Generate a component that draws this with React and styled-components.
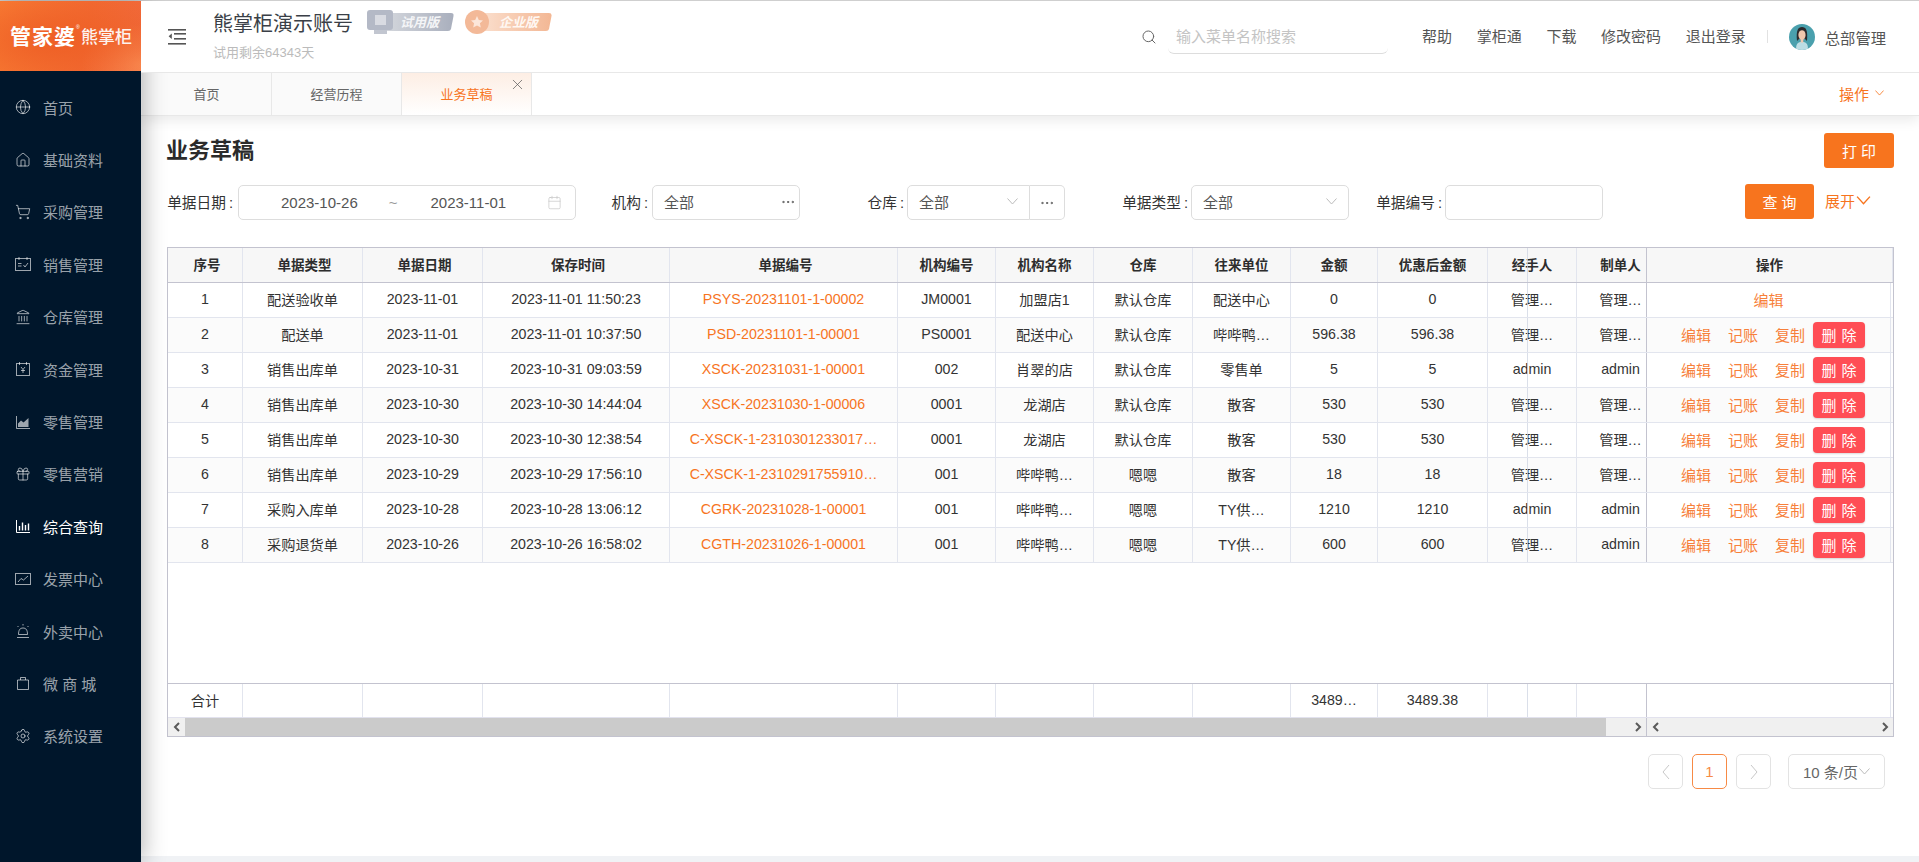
import styled, { createGlobalStyle, css } from 'styled-components';
import { Globe, House, ShoppingCart, Landmark, Gift, Settings, Search, X, Calendar, Ellipsis } from 'lucide-react';

const orange = '#f7741e';
const FONT = '"Liberation Sans", "Noto Sans CJK SC", sans-serif';

const GlobalStyle = createGlobalStyle`
  html, body {
    margin: 0;
    height: 100%;
    overflow: hidden;
    background: #fff;
    font-family: ${FONT};
    color: #333;
  }
  * { box-sizing: border-box; }
`;

const Page = styled.div`
  display: flex;
  height: 100vh;
  border-top: 1px solid #cfcfcf;
`;

const Sidebar = styled.aside`
  position: relative;
  z-index: 2;
  flex: 0 0 141px;
  background: #00162b;
  box-shadow: 2px 0 22px rgba(0, 0, 0, 0.3);
`;

const Logo = styled.div`
  height: 70px;
  display: flex;
  align-items: center;
  padding: 0 0 2px 10px;
  color: #fff;
  white-space: nowrap;
  background:
    radial-gradient(ellipse 120px 50px at 40% 55%, #ee5f25 0%, rgba(238, 95, 37, 0) 100%),
    radial-gradient(ellipse 60px 40px at 100% 90%, #f98a52 0%, rgba(249, 138, 82, 0) 100%),
    linear-gradient(100deg, #f87b33 0%, #f26a32 60%, #f0683a 100%);

  b {
    font-size: 21px;
    font-weight: 700;
    letter-spacing: 1px;
  }
  em {
    align-self: flex-start;
    margin: 23px 0 0 0;
    width: 5px;
    font-size: 5px;
    font-style: normal;
  }
  span {
    font-size: 17px;
    font-weight: 500;
    opacity: 0.92;
  }
`;

const Menu = styled.nav`
  padding-top: 10px;
`;

const MenuItem = styled.div`
  height: 52.4px;
  display: flex;
  align-items: center;
  gap: 12px;
  padding-left: 15px;
  font-size: 15px;
  color: ${(p) => (p.$active ? '#fff' : 'rgba(255, 255, 255, 0.62)')};

  svg {
    flex: 0 0 16px;
  }
`;

const Right = styled.div`
  flex: 1;
  min-width: 0;
  display: flex;
  flex-direction: column;
`;

const Header = styled.header`
  position: relative;
  z-index: 3;
  height: 72px;
  display: flex;
  align-items: center;
  padding: 0 33px 0 27px;
  background: #fff;
  border-bottom: 1px solid #e8e8e8;
`;

const Account = styled.div`
  margin-left: 27px;
  display: flex;
  flex-direction: column;
  gap: 8px;
  margin-top: 2px;
`;

const AccountRow = styled.div`
  display: flex;
  align-items: center;
  gap: 11px;
  height: 24px;
  margin-top: -4px;
`;

const AccountName = styled.div`
  font-size: 20px;
  color: #3a3f47;
  margin-right: 3px;
`;

const Remain = styled.div`
  font-size: 13px;
  color: #bbb;
`;

const SearchBox = styled.div`
  margin-left: auto;
  display: flex;
  align-items: center;
  gap: 11px;
  color: #666;
`;

const SearchField = styled.div`
  width: 220px;
  height: 33px;
  padding: 0 8px 3px;
  display: flex;
  align-items: center;
  margin-top: 2px;
  font-size: 15px;
  color: #c4c4c4;
  border-bottom: 1px solid #ddd;
  border-radius: 0 0 6px 6px;
`;

const TopLinks = styled.div`
  margin-left: 34px;
  padding-bottom: 2px;
  display: flex;
  gap: 24.7px;
  font-size: 15px;
  color: #555;
`;

const Divider = styled.div`
  width: 1px;
  height: 13px;
  margin: 0 21px 0 21px;
  background: #e2e2e2;
`;

const UserName = styled.div`
  margin-left: 10px;
  font-size: 15.3px;
  color: #555;
`;

const TabBar = styled.div`
  position: relative;
  z-index: 1;
  height: 43px;
  display: flex;
  align-items: stretch;
  padding: 0 35px 0 1px;
  background: #fff;
  border-bottom: 1px solid #e8e8e8;
  box-shadow: 0 4px 14px rgba(0, 0, 0, 0.09);
`;

const Tab = styled.div`
  position: relative;
  width: 130px;
  padding-bottom: 2px;
  display: flex;
  align-items: center;
  justify-content: center;
  font-size: 13px;
  color: ${(p) => (p.$active ? orange : '#666')};
  background: ${(p) => (p.$active ? 'linear-gradient(180deg, #fdeee4 0%, #ffffff 100%)' : '#fafafa')};
  border-right: 1px solid #e8e8e8;
`;

const TabClose = styled.span`
  position: absolute;
  top: 3px;
  right: 5px;
  display: flex;
  color: #555;
`;

const TabAction = styled.div`
  margin-left: auto;
  padding-bottom: 2px;
  display: flex;
  align-items: center;
  gap: 6px;
  font-size: 15px;
  color: ${orange};
`;

const Main = styled.main`
  flex: 1;
  min-height: 0;
  padding: 17px 25px 0 26px;
  background: #fff;
`;

const TitleRow = styled.div`
  display: flex;
  align-items: center;
  justify-content: space-between;
  height: 35px;
`;

const Title = styled.h2`
  margin: 0 0 0 -1px;
  padding-bottom: 6px;
  font-size: 22px;
  font-weight: 700;
  color: #2b2b2b;
`;

const PrimaryButton = styled.button`
  width: ${(p) => p.$w}px;
  height: 35px;
  padding: 0 0 0 4px;
  border: 0;
  border-radius: 3px;
  background: ${orange};
  color: #fff;
  font-family: ${FONT};
  font-size: 15px;
  letter-spacing: 4px;
`;

const FilterRow = styled.div`
  display: flex;
  align-items: center;
  height: 35px;
  margin-top: 17px;
`;

const Field = styled.div`
  flex: 0 0 ${(p) => p.$w}px;
  display: flex;
  align-items: center;
  justify-content: flex-end;
`;

const Label = styled.div`
  margin-right: ${(p) => p.$gap || 3}px;
  padding-bottom: 2px;
  font-size: 14.7px;
  color: #333;
  white-space: nowrap;

  &::after {
    content: ':';
    margin-left: 3px;
  }
`;

const InputBox = styled.div`
  width: ${(p) => p.$w}px;
  height: 35px;
  display: flex;
  align-items: center;
  justify-content: space-between;
  padding: 0 ${(p) => p.$pr || 11}px 2px 11px;
  font-size: 15px;
  color: #555;
  background: #fff;
  border: 1px solid #ddd;
  border-radius: ${(p) => (p.$joined ? '5px 0 0 5px' : '5px')};
`;

const SideButton = styled.div`
  width: 35px;
  height: 35px;
  display: flex;
  align-items: center;
  justify-content: center;
  color: #555;
  border: 1px solid #ddd;
  border-left: 0;
  border-radius: 0 5px 5px 0;
`;

const DateBox = styled(InputBox)`
  padding: 0 13px 0 42px;
  justify-content: flex-start;

  i {
    font-style: normal;
    color: #999;
    margin: 0 33px 0 31px;
  }
  svg {
    margin-left: auto;
  }
`;

const Expand = styled.div`
  margin-left: 11px;
  padding-bottom: 2px;
  display: flex;
  align-items: center;
  gap: 1px;
  font-size: 15px;
  color: ${orange};
`;

const Buttons = styled.div`
  margin-left: auto;
  margin-right: 23px;
  margin-top: -2px;
  display: flex;
  align-items: center;
`;

const Table = styled.div`
  margin-top: 27px;
  border: 1px solid #c3c3cf;
  font-size: 14.2px;
  color: #333;
`;

// fixed column edge that shows through the rows of the scrolled table
const seam = css`
  position: relative;

  &::after {
    content: '';
    position: absolute;
    top: 0;
    bottom: 0;
    left: 1359px;
    width: 1px;
    background: rgba(205, 212, 226, 0.75);
  }
`;

const COLUMNS = '75px 120px 120px 187px 228px 98px 98px 99px 98px 87px 110px 89px 70px 246px';

const HeadRow = styled.div`
  ${seam}
  display: grid;
  grid-template-columns: ${COLUMNS};
  height: 35px;
  background: #f7f7f7;
  border-bottom: 1px solid #c3c3cf;
  font-size: 13.5px;
  font-weight: 700;
  color: #2d2d2d;
`;

const BodyRow = styled.div`
  ${seam}
  display: grid;
  grid-template-columns: ${COLUMNS};
  height: 35px;
  background: ${(p) => (p.$odd ? '#fff' : '#fbfbfb')};
  border-bottom: 1px solid #e2e5ee;
`;

const Blank = styled.div`
  height: 120px;
`;

const FootRow = styled.div`
  ${seam}
  display: grid;
  grid-template-columns: ${COLUMNS};
  height: 35px;
  border-top: 1px solid #c3c3cf;
  border-bottom: 1px solid #e2e2ee;
`;

const Cell = styled.div`
  display: flex;
  align-items: center;
  justify-content: center;
  min-width: 0;
  white-space: nowrap;
  padding-left: ${(p) => p.$pl || 0}px;
  padding-bottom: 2px;
  border-right: 1px solid ${(p) => (p.$dark ? '#c3c3cf' : '#e2e5ee')};
`;

const Link = styled.span`
  color: ${orange};
`;

const ActionCell = styled.div`
  display: flex;
  align-items: center;
  justify-content: center;
  gap: 17px;
  margin-right: 2px;
  font-size: 15px;
  border-right: 1px solid #e2e5ee;
`;

const ActionLink = styled.span`
  padding-bottom: 2px;
  color: #f7803a;
`;

const DeleteButton = styled.span`
  width: 52px;
  height: 26px;
  margin: 0 -9px 0 -9px;
  padding: 0 0 1px 5px;
  display: flex;
  align-items: center;
  justify-content: center;
  border-radius: 4px;
  background: #ff4d55;
  color: #fff;
  font-size: 15px;
  letter-spacing: 5px;
  box-shadow: 0 1px 2px rgba(0, 0, 0, 0.15);
`;

const ScrollRow = styled.div`
  display: flex;
  height: 18px;
  background: #f0f0f0;
`;

const ScrollLeft = styled.div`
  flex: 0 0 1479px;
  display: flex;
  align-items: center;
  justify-content: space-between;
  border-right: 1px solid #c3c3cf;
`;

const ScrollRight = styled.div`
  flex: 1;
  display: flex;
  align-items: center;
  justify-content: space-between;
`;

const Arrow = styled.div`
  flex: 0 0 17px;
  display: flex;
  align-items: center;
  justify-content: center;
  color: #555;
`;

const Thumb = styled.div`
  flex: 1;
  align-self: stretch;
  margin-right: 23px;
  background: #cbcbcb;
`;

const Pager = styled.div`
  display: flex;
  justify-content: flex-end;
  gap: 9px;
  margin-top: 17px;
  padding-right: 9px;
`;

const PageButton = styled.div`
  width: 35px;
  height: 35px;
  display: flex;
  align-items: center;
  justify-content: center;
  font-size: 15px;
  color: ${(p) => (p.$active ? '#f78a45' : '#ccc')};
  border: 1px solid ${(p) => (p.$active ? '#f78a45' : '#e3e3e3')};
  border-radius: 5px;
`;

const PageSize = styled.div`
  width: 97px;
  height: 35px;
  margin-left: 8px;
  padding-bottom: 1px;
  display: flex;
  align-items: center;
  justify-content: center;
  gap: 1px;
  font-size: 15px;
  color: #666;
  border: 1px solid #e3e3e3;
  border-radius: 5px;
`;

const BottomBand = styled.div`
  flex: 0 0 6px;
  background: #f0f2f5;
`;

const Chevron = ({ w = 11, h = 7, color = 'currentColor', sw = 1 }) => (
  <svg width={w} height={h} viewBox="0 0 11 7" fill="none" stroke={color} strokeWidth={sw}>
    <path d="M0.5 0.5 L5.5 6 L10.5 0.5" />
  </svg>
);

const Caret = ({ dir }) => (
  <svg width="10" height="18" viewBox="0 0 10 18" fill="none" stroke="#c8c8c8" strokeWidth="1">
    <path d={dir === 'left' ? 'M8 2 L2 9 L8 16' : 'M2 2 L8 9 L2 16'} />
  </svg>
);

const ScrollArrow = ({ dir }) => (
  <svg width="8" height="10" viewBox="0 0 8 10" fill="none" stroke="#5a5a5a" strokeWidth="2">
    <path d={dir === 'left' ? 'M6 1 L2 5 L6 9' : 'M2 1 L6 5 L2 9'} />
  </svg>
);

const MenuToggle = () => (
  <svg width="18" height="16" viewBox="0 0 18 16" fill="#555">
    <rect x="0" y="0" width="18" height="1.6" />
    <rect x="6" y="4" width="12" height="1.6" />
    <rect x="6" y="9" width="12" height="1.6" />
    <rect x="0" y="14" width="18" height="1.6" />
    <path d="M3.8 4.4 L0.6 7.2 L3.8 10 Z" />
  </svg>
);

const Line = ({ children }) => (
  <svg width="16" height="16" viewBox="0 0 16 16" fill="none" stroke="currentColor" strokeWidth="1">
    {children}
  </svg>
);

const SaleIcon = () => (
  <Line>
    <rect x="0.5" y="2.5" width="15" height="12" />
    <path d="M4 1 V4 M12 1 V4 M3 7.5 H6.5 M3 10 H6.5 M8.5 9 L10 11 L13 7" />
  </Line>
);
const FundIcon = () => (
  <Line>
    <rect x="1.5" y="2.5" width="13" height="12" />
    <path d="M4.5 1 V4 M11.5 1 V4 M6 6 L8 8.5 L10 6 M8 8.5 V12 M6 9.5 H10" />
  </Line>
);
const AreaIcon = () => (
  <Line>
    <path d="M1.5 2 V14.5 H15" />
    <path d="M3 13 V9.5 L6 6.5 L8.5 8.5 L13.5 4 V13 Z" fill="currentColor" stroke="none" />
  </Line>
);
const BarsIcon = () => (
  <Line>
    <path d="M1.5 2 V14.5 H15" />
    <path d="M4.5 12.5 V8 M7.5 12.5 V4.5 M10.5 12.5 V7 M13.5 12.5 V5.5" strokeWidth="1.4" />
  </Line>
);
const TrendIcon = () => (
  <Line>
    <rect x="0.5" y="2.5" width="15" height="11" />
    <path d="M3 11 L6 7.5 L8.5 9 L13 5" />
  </Line>
);
const AlarmIcon = () => (
  <Line>
    <path d="M3.5 11.5 C3.5 7 5 5 8 5 C11 5 12.5 7 12.5 11.5 Z M2 14.5 H14 M8 1 V2.5 M2.5 3 L3.5 4 M13.5 3 L12.5 4" />
  </Line>
);
const BagIcon = () => (
  <Line>
    <path d="M2.5 5 H13.5 V14.5 H2.5 Z M5.5 5 V2.5 H10.5 V5" />
  </Line>
);

const lucideProps = { size: 16, strokeWidth: 1.5 };

const MENU = [
  { label: '首页', icon: <Globe {...lucideProps} /> },
  { label: '基础资料', icon: <House {...lucideProps} /> },
  { label: '采购管理', icon: <ShoppingCart {...lucideProps} /> },
  { label: '销售管理', icon: <SaleIcon /> },
  { label: '仓库管理', icon: <Landmark {...lucideProps} /> },
  { label: '资金管理', icon: <FundIcon /> },
  { label: '零售管理', icon: <AreaIcon /> },
  { label: '零售营销', icon: <Gift {...lucideProps} /> },
  { label: '综合查询', icon: <BarsIcon />, active: true },
  { label: '发票中心', icon: <TrendIcon /> },
  { label: '外卖中心', icon: <AlarmIcon /> },
  { label: '微 商 城', icon: <BagIcon /> },
  { label: '系统设置', icon: <Settings {...lucideProps} /> },
];

const TrialBadge = () => (
  <svg width="87" height="24" viewBox="0 0 87 24">
    <defs>
      <linearGradient id="trialBar" x1="0" x2="1" y1="0" y2="0">
        <stop offset="0" stopColor="#d3d6dc" />
        <stop offset="1" stopColor="#a9afbd" />
      </linearGradient>
    </defs>
    <path d="M20 3 H84 Q87 3 86.5 6 L84 19 Q83.5 21 81 21 H20 Z" fill="url(#trialBar)" />
    <rect x="0" y="0" width="26" height="20" rx="3" fill="#b4b9c6" />
    <rect x="7" y="20" width="13" height="4" fill="#c2c6d0" />
    <rect x="8" y="5" width="11" height="10" fill="#d9dbe2" />
    <text x="33" y="17" fontFamily={FONT} fontSize="13" fontWeight="700" fontStyle="italic" fill="#f4f5f7">试用版</text>
  </svg>
);

const ProBadge = () => (
  <svg width="87" height="24" viewBox="0 0 87 24">
    <defs>
      <linearGradient id="proBar" x1="0" x2="1" y1="0" y2="0">
        <stop offset="0" stopColor="#fbe0cf" />
        <stop offset="1" stopColor="#f3b794" />
      </linearGradient>
    </defs>
    <path d="M14 3 H84 Q87 3 86.5 6 L84 19 Q83.5 21 81 21 H14 Z" fill="url(#proBar)" />
    <circle cx="12" cy="12" r="12" fill="#f3b998" />
    <path d="M12 6 L13.8 10 L18 10.5 L14.9 13.3 L15.8 17.6 L12 15.4 L8.2 17.6 L9.1 13.3 L6 10.5 L10.2 10 Z" fill="#fce6da" />
    <text x="34" y="17" fontFamily={FONT} fontSize="13" fontWeight="700" fontStyle="italic" fill="#fff8f3">企业版</text>
  </svg>
);

const Avatar = () => (
  <svg width="26" height="26" viewBox="0 0 26 26">
    <defs>
      <clipPath id="avatarClip">
        <circle cx="13" cy="13" r="13" />
      </clipPath>
    </defs>
    <g clipPath="url(#avatarClip)">
      <rect width="26" height="26" fill="#4aa0ad" />
      <path d="M7 26 C7 19 9 18 13 18 C17 18 19 19 19 26 Z" fill="#bcdde4" />
      <path d="M8 17 C7 6 9 3 13 3 C17 3 19 6 18 17 L16 15 H10 Z" fill="#2c2a2d" />
      <ellipse cx="13" cy="11" rx="3.6" ry="4.8" fill="#f0c7ad" />
      <rect x="11.7" y="14" width="2.6" height="4.5" fill="#f0c7ad" />
    </g>
  </svg>
);

const ROWS = [
  ['1', '配送验收单', '2023-11-01', '2023-11-01 11:50:23', 'PSYS-20231101-1-00002', 'JM0001', '加盟店1', '默认仓库', '配送中心', '0', '0', '管理…', '管理…'],
  ['2', '配送单', '2023-11-01', '2023-11-01 10:37:50', 'PSD-20231101-1-00001', 'PS0001', '配送中心', '默认仓库', '哔哔鸭…', '596.38', '596.38', '管理…', '管理…'],
  ['3', '销售出库单', '2023-10-31', '2023-10-31 09:03:59', 'XSCK-20231031-1-00001', '002', '肖翠的店', '默认仓库', '零售单', '5', '5', 'admin', 'admin'],
  ['4', '销售出库单', '2023-10-30', '2023-10-30 14:44:04', 'XSCK-20231030-1-00006', '0001', '龙湖店', '默认仓库', '散客', '530', '530', '管理…', '管理…'],
  ['5', '销售出库单', '2023-10-30', '2023-10-30 12:38:54', 'C-XSCK-1-2310301233017…', '0001', '龙湖店', '默认仓库', '散客', '530', '530', '管理…', '管理…'],
  ['6', '销售出库单', '2023-10-29', '2023-10-29 17:56:10', 'C-XSCK-1-2310291755910…', '001', '哔哔鸭…', '嗯嗯', '散客', '18', '18', '管理…', '管理…'],
  ['7', '采购入库单', '2023-10-28', '2023-10-28 13:06:12', 'CGRK-20231028-1-00001', '001', '哔哔鸭…', '嗯嗯', 'TY供…', '1210', '1210', 'admin', 'admin'],
  ['8', '采购退货单', '2023-10-26', '2023-10-26 16:58:02', 'CGTH-20231026-1-00001', '001', '哔哔鸭…', '嗯嗯', 'TY供…', '600', '600', '管理…', 'admin'],
];

const HEADS = ['序号', '单据类型', '单据日期', '保存时间', '单据编号', '机构编号', '机构名称', '仓库', '往来单位', '金额', '优惠后金额', '经手人', '制单人', '操作'];

const FOOT = ['合计', '', '', '', '', '', '', '', '', '3489…', '3489.38', '', ''];

const cellProps = (i) => (i === 12 ? { $dark: true, $pl: 18 } : {});

export default function App() {
  return (
    <>
      <GlobalStyle />
      <Page>
        <Sidebar>
          <Logo>
            <b>管家婆</b>
            <em>®</em>
            <span>熊掌柜</span>
          </Logo>
          <Menu>
            {MENU.map((m) => (
              <MenuItem key={m.label} $active={m.active}>
                {m.icon}
                {m.label}
              </MenuItem>
            ))}
          </Menu>
        </Sidebar>
        <Right>
          <Header>
            <MenuToggle />
            <Account>
              <AccountRow>
                <AccountName>熊掌柜演示账号</AccountName>
                <TrialBadge />
                <ProBadge />
              </AccountRow>
              <Remain>试用剩余64343天</Remain>
            </Account>
            <SearchBox>
              <Search size={16} strokeWidth={1.5} />
              <SearchField>输入菜单名称搜索</SearchField>
            </SearchBox>
            <TopLinks>
              <span>帮助</span>
              <span>掌柜通</span>
              <span>下载</span>
              <span>修改密码</span>
              <span>退出登录</span>
            </TopLinks>
            <Divider />
            <Avatar />
            <UserName>总部管理</UserName>
          </Header>
          <TabBar>
            <Tab>首页</Tab>
            <Tab>经营历程</Tab>
            <Tab $active>
              业务草稿
              <TabClose>
                <X size={17} strokeWidth={1} />
              </TabClose>
            </Tab>
            <TabAction>
              操作
              <Chevron w={9} h={6} />
            </TabAction>
          </TabBar>
          <Main>
            <TitleRow>
              <Title>业务草稿</Title>
              <PrimaryButton $w={70}>打印</PrimaryButton>
            </TitleRow>
            <FilterRow>
              <Field $w={409}>
                <Label $gap={5}>单据日期</Label>
                <DateBox $w={338}>
                  2023-10-26
                  <i>~</i>
                  2023-11-01
                  <Calendar size={15} strokeWidth={1.1} color="#c4c4c4" />
                </DateBox>
              </Field>
              <Field $w={224}>
                <Label $gap={4}>机构</Label>
                <InputBox $w={148} $pr={3}>
                  全部
                  <Ellipsis size={16} strokeWidth={1.4} color="#555" />
                </InputBox>
              </Field>
              <Field $w={265}>
                <Label>仓库</Label>
                <InputBox $w={123} $joined>
                  全部
                  <Chevron color="#bbb" />
                </InputBox>
                <SideButton>
                  <Ellipsis size={16} strokeWidth={1.4} />
                </SideButton>
              </Field>
              <Field $w={284}>
                <Label>单据类型</Label>
                <InputBox $w={158}>
                  全部
                  <Chevron color="#bbb" />
                </InputBox>
              </Field>
              <Field $w={254}>
                <Label>单据编号</Label>
                <InputBox $w={158} />
              </Field>
              <Buttons>
                <PrimaryButton $w={69}>查询</PrimaryButton>
                <Expand>
                  展开
                  <Chevron w={15} h={9} sw={1.1} />
                </Expand>
              </Buttons>
            </FilterRow>
            <Table>
              <HeadRow>
                {HEADS.map((h, i) => (
                  <Cell key={h} {...cellProps(i)} {...(i < 5 ? { $pl: 4 } : {})}>{h}</Cell>
                ))}
              </HeadRow>
              {ROWS.map((r, idx) => (
                <BodyRow key={r[0]} $odd={idx % 2 === 0}>
                  {r.map((v, i) => (
                    <Cell key={i} {...cellProps(i)}>
                      {i === 4 ? <Link>{v}</Link> : v}
                    </Cell>
                  ))}
                  <ActionCell>
                    <ActionLink>编辑</ActionLink>
                    {idx > 0 && (
                      <>
                        <ActionLink>记账</ActionLink>
                        <ActionLink>复制</ActionLink>
                        <DeleteButton>删除</DeleteButton>
                      </>
                    )}
                  </ActionCell>
                </BodyRow>
              ))}
              <Blank />
              <FootRow>
                {FOOT.map((v, i) => (
                  <Cell key={i} {...cellProps(i)}>{v}</Cell>
                ))}
                <ActionCell />
              </FootRow>
              <ScrollRow>
                <ScrollLeft>
                  <Arrow><ScrollArrow dir="left" /></Arrow>
                  <Thumb />
                  <Arrow><ScrollArrow dir="right" /></Arrow>
                </ScrollLeft>
                <ScrollRight>
                  <Arrow><ScrollArrow dir="left" /></Arrow>
                  <Arrow><ScrollArrow dir="right" /></Arrow>
                </ScrollRight>
              </ScrollRow>
            </Table>
            <Pager>
              <PageButton><Caret dir="left" /></PageButton>
              <PageButton $active>1</PageButton>
              <PageButton><Caret dir="right" /></PageButton>
              <PageSize>
                10 条/页
                <Chevron color="#bbb" />
              </PageSize>
            </Pager>
          </Main>
          <BottomBand />
        </Right>
      </Page>
    </>
  );
}
